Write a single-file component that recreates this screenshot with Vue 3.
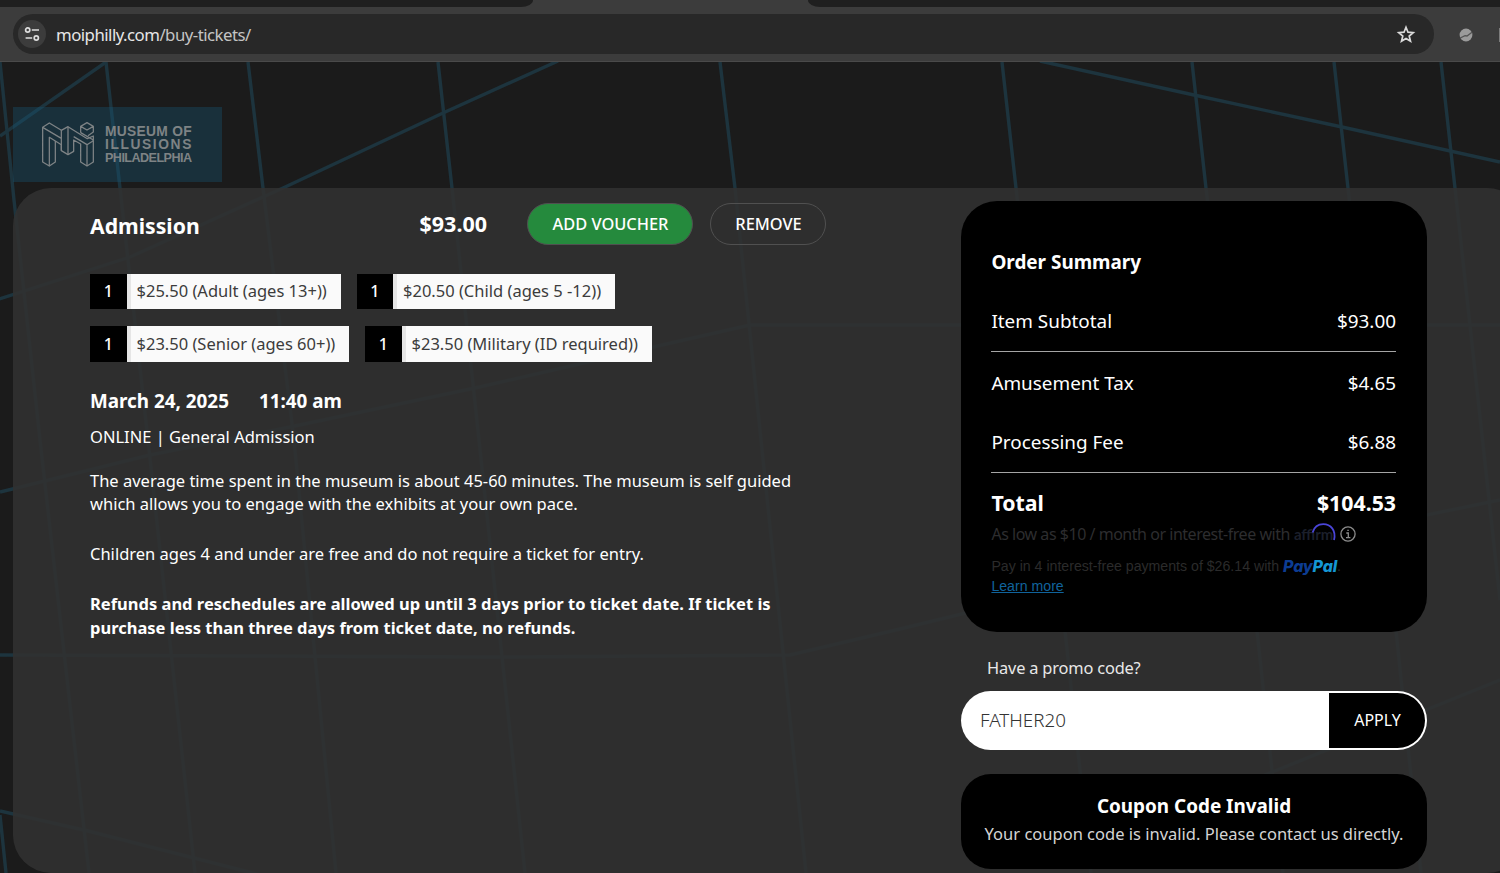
<template>
  <div class="window">
    <div class="tab-strip">
      <div class="tab-left"></div>
      <div class="tab-right"></div>
    </div>
    <div class="toolbar">
      <div class="omnibox">
        <span class="site-info">
          <svg width="16" height="16" viewBox="0 0 16 16" fill="none" stroke="#dedede" stroke-width="1.7">
            <circle cx="3.7" cy="4" r="2.1" />
            <path d="M7.8 4H15M1.6 12H8.2" />
            <circle cx="12.3" cy="12" r="2.1" />
          </svg>
        </span>
        <span class="url">moiphilly.com<span class="url-path">/buy-tickets/</span></span>
        <svg class="star" width="20" height="20" viewBox="0 0 20 20" fill="none" stroke="#dadada" stroke-width="1.7">
          <path d="M10 3.3L12 8.2L17.2 8.6L13.2 12L14.5 17.1L10 14.4L5.5 17.1L6.8 12L2.8 8.6L8 8.2Z" />
        </svg>
      </div>
      <svg class="extension" width="14" height="14" viewBox="0 0 14 14">
        <circle cx="7" cy="7" r="6.4" fill="#9b9b9b" />
        <path d="M1.2 10L6 7.6L8 8L13 4.2" fill="none" stroke="#555" stroke-width="1.3" />
      </svg>
      <span class="edge-dot"></span>
    </div>

    <div class="page">
      <svg class="backdrop" width="1500" height="811" viewBox="0 62 1500 811" fill="none">
        <path v-for="(d, index) in gridLines" :key="index" :d="d" />
      </svg>

      <div class="logo">
        <svg class="logo-mark" width="54" height="46" viewBox="9 9 162 138" fill="none">
          <path d="M14 28L34 15L70 37L90 26L148 62L166 54V132L147 144L128 132V78L107 66V100L90 110L70 98V80L34 58V144L14 132Z" />
          <path d="M14 28L70 61V98M70 37V61M90 26V110M34 144L52 132V69M107 56L147 80V144M147 80L166 68M128 44L166 66" />
          <path d="M128 44V25L147 14L166 25V42L150 53M128 25L147 36L166 25" />
        </svg>
        <div class="logo-text">
          <span class="logo-l1">MUSEUM OF</span>
          <span class="logo-l2">ILLUSIONS</span>
          <span class="logo-l3">PHILADELPHIA</span>
        </div>
      </div>

      <main class="cart">
        <section class="details">
          <div class="item-head">
            <h2 class="item-name">Admission</h2>
            <span class="item-price">$93.00</span>
            <button class="btn btn-voucher">ADD VOUCHER</button>
            <button class="btn btn-remove">REMOVE</button>
          </div>

          <div v-for="(row, index) in tickets" :key="index" class="ticket-row">
            <div v-for="ticket in row" :key="ticket.label" class="ticket">
              <span class="qty">{{ ticket.qty }}</span>
              <span class="ticket-label">{{ ticket.label }}</span>
            </div>
          </div>

          <div class="when">
            <span class="date">March 24, 2025</span>
            <span class="time">11:40 am</span>
          </div>
          <p class="type">ONLINE | General Admission</p>
          <p class="copy">The average time spent in the museum is about 45-60 minutes. The museum is self guided<br>which allows you to engage with the exhibits at your own pace.</p>
          <p class="copy copy-free">Children ages 4 and under are free and do not require a ticket for entry.</p>
          <p class="copy copy-bold">Refunds and reschedules are allowed up until 3 days prior to ticket date. If ticket is<br>purchase less than three days from ticket date, no refunds.</p>
        </section>

        <aside class="sidebar">
          <div class="summary">
            <h3 class="summary-title">Order Summary</h3>
            <div v-for="line in charges" :key="line.name" class="charge" :class="line.cls">
              <span>{{ line.name }}</span>
              <span>{{ line.amount }}</span>
            </div>
            <div class="total">
              <span>Total</span>
              <span>$104.53</span>
            </div>
            <div class="affirm">
              <span class="affirm-text">As low as $10 / month or interest-free with</span>
              <span class="affirm-logo">affirm
                <svg class="affirm-arc" width="26" height="20" viewBox="0 0 26 20" fill="none" stroke="#4a45d8" stroke-width="1.8">
                  <path d="M1.6 9.5C3.2 4 7.5 1.2 12.3 1.2C19.5 1.2 25.4 7 23 17" />
                </svg>
              </span>
              <svg class="info" width="16" height="16" viewBox="0 0 16 16" fill="none" stroke="#8c8c8c" stroke-width="1.3">
                <circle cx="8" cy="8" r="7.1" />
                <path d="M6.3 7H8.3V11.5M6 11.6H10.4M7.3 4.4H8.8" />
              </svg>
            </div>
            <div class="paypal">
              <span class="paypal-text">Pay in 4 interest-free payments of $26.14 with</span>
              <span class="paypal-logo"><span class="pay">Pay</span><span class="pal">Pal</span></span>
              <span class="paypal-dot">.</span>
            </div>
            <a class="learn">Learn more</a>
          </div>

          <label class="promo-label">Have a promo code?</label>
          <div class="promo">
            <span class="promo-value">{{ promoCode }}</span>
            <button class="apply">APPLY</button>
          </div>

          <div class="alert">
            <strong class="alert-title">Coupon Code Invalid</strong>
            <span class="alert-text">Your coupon code is invalid. Please contact us directly.</span>
          </div>
        </aside>
      </main>
    </div>
  </div>
</template>

<script setup>
import { ref } from 'vue'

const promoCode = ref('FATHER20')

const tickets = [
  [
    { qty: 1, label: '$25.50 (Adult (ages 13+))' },
    { qty: 1, label: '$20.50 (Child (ages 5 -12))' },
  ],
  [
    { qty: 1, label: '$23.50 (Senior (ages 60+))' },
    { qty: 1, label: '$23.50 (Military (ID required))' },
  ],
]

const charges = [
  { name: 'Item Subtotal', amount: '$93.00', cls: 'subtotal' },
  { name: 'Amusement Tax', amount: '$4.65', cls: 'tax' },
  { name: 'Processing Fee', amount: '$6.88', cls: 'fee' },
]

// perspective grid behind the cart
const gridLines = [
  'M0 62L14 200L40 440L89 873',
  'M106 62L120 188L148 440L195 873',
  'M248 62L263 188L294 440L336 873',
  'M438 62L452 188L479 440L525 873',
  'M720 62L735 188L761 440L806 873',
  'M1002 62L1016 188L1066 640L1091 873',
  'M1192 62L1206 188L1258 640L1283 873',
  'M1334 62L1348 188L1397 640L1421 873',
  'M1441 62L1455 188L1500 600',
  'M0 136L106 62',
  'M-4 300L130 257L283 188L443 113L558 61',
  'M1040 61L1194 95L1342 127L1500 162',
  'M0 492L150 455L290 427L475 388L640 350L750 325H1500',
  'M0 655L500 657L790 655L900 629L1060 590L1500 500',
  'M0 811L88 831L280 880M1180 812L1265 775L1500 680',
  'M0 815L6 873',
]
</script>

<style>
body {
  background: #1b1b1b;
}
</style>

<style scoped>
.window {
  width: 1500px;
  height: 873px;
  overflow: hidden;
  display: flex;
  flex-direction: column;
  font-family: "Noto Sans", sans-serif;
  color: #fff;
}

.tab-strip {
  height: 7px;
  display: flex;
  justify-content: space-between;
  background: #3c3c3c;
}

.tab-left {
  width: 533px;
  background: #1f1f1f;
  border-bottom-right-radius: 12px 7px;
}

.tab-right {
  width: 692px;
  background: #1f1f1f;
  border-bottom-left-radius: 12px 7px;
}

.toolbar {
  box-sizing: border-box;
  height: 55px;
  padding: 7px 0 0 13px;
  display: flex;
  background: #3c3c3c;
  border-bottom: 1px solid #4a4a4a;
}

.omnibox {
  box-sizing: border-box;
  width: 1421px;
  height: 40px;
  padding: 0 18px 0 5px;
  display: flex;
  align-items: center;
  border-radius: 20px;
  background: #282828;
}

.site-info {
  width: 28px;
  height: 28px;
  display: flex;
  align-items: center;
  justify-content: center;
  border-radius: 50%;
  background: #3c3c3c;
}

.url {
  margin-left: 10px;
  font-size: 16.8px;
  letter-spacing: -0.52px;
  color: #e6e6e6;
}

.url-path {
  color: #c4c4c4;
}

.star {
  margin-left: auto;
}

.extension {
  margin: 13.5px 0 0 25px;
}

.edge-dot {
  width: 1px;
  height: 14px;
  margin: 14px 0 0 auto;
  background: #7c7c7c;
}

.page {
  position: relative;
  flex: 1;
  box-sizing: border-box;
  padding-top: 45px;
  background: #1b1b1b;
}

.backdrop {
  position: absolute;
  top: 0;
  left: 0;
  stroke: #1d343e;
  stroke-width: 3.4;
}

.logo {
  position: relative;
  box-sizing: border-box;
  width: 209px;
  height: 75px;
  margin: 0 0 6px 13px;
  padding: 14px 0 0 28px;
  display: flex;
  background: rgba(24, 90, 120, 0.35);
}

.logo-mark {
  stroke: #7e8385;
  stroke-width: 3.8;
  stroke-linejoin: round;
}

.logo-text {
  margin: 4px 0 0 10px;
  display: flex;
  flex-direction: column;
  font: bold 13.8px/13.4px "Liberation Sans", Arial, sans-serif;
  color: #7e8385;
  white-space: pre;
}

.logo-l1 {
  letter-spacing: 0.3px;
}

.logo-l2 {
  letter-spacing: 1.6px;
}

.logo-l3 {
  font-size: 12.6px;
  letter-spacing: -0.55px;
}

.cart {
  position: relative;
  box-sizing: border-box;
  width: 1512px;
  height: 685px;
  margin-left: 13px;
  padding-left: 77px;
  display: flex;
  border-radius: 38px;
  background: rgba(49, 49, 49, 0.9);
}

.details {
  width: 871px;
  padding-top: 15px;
}

.item-head {
  height: 42px;
  display: flex;
  align-items: center;
}

.item-name {
  width: 329.5px;
  margin: 4px 0 0;
  font-size: 21.2px;
  line-height: 30px;
}

.item-price {
  width: 107.5px;
  padding-bottom: 2px;
  font-size: 21.5px;
  font-weight: bold;
}

.btn {
  box-sizing: border-box;
  height: 42px;
  padding: 0 0 2px 1px;
  border: 1px solid #505050;
  border-radius: 21px;
  font-family: inherit;
  font-size: 16.4px;
  font-weight: 500;
  color: #fff;
  background: none;
}

.btn-voucher {
  width: 166px;
  margin-right: 17px;
  background: #258a3d;
}

.btn-remove {
  width: 116px;
}

.ticket-row {
  height: 35px;
  margin-top: 28.5px;
  display: flex;
  gap: 16px;
}

.ticket-row + .ticket-row {
  height: 36px;
  margin-top: 17.5px;
}

.ticket {
  display: flex;
  align-items: center;
  background: #fafafa;
}

.qty {
  width: 36.5px;
  align-self: stretch;
  display: flex;
  align-items: center;
  justify-content: center;
  background: #000;
  font-size: 16px;
  font-weight: 500;
}

.ticket-label {
  padding: 0 13.7px 2px 6px;
  border-left: 4px solid #e6e6e6;
  align-self: stretch;
  display: flex;
  align-items: center;
  font-size: 16.5px;
  color: #3c3c3c;
  white-space: nowrap;
}

.when {
  margin-top: 25px;
  font-size: 18.85px;
  font-weight: bold;
  line-height: 28px;
}

.time {
  margin-left: 30px;
}

.type {
  margin: 9.5px 0 0;
  font-size: 16.5px;
  line-height: 24px;
}

.copy {
  margin: 20.2px 0 0;
  font-size: 16.5px;
  line-height: 23.6px;
  white-space: nowrap;
}

.copy-free,
.copy-bold {
  margin-top: 26.3px;
}

.copy-bold {
  font-weight: bold;
}

.sidebar {
  width: 466px;
  padding-top: 13px;
  display: flex;
  flex-direction: column;
}

.summary {
  box-sizing: border-box;
  height: 431px;
  padding: 46px 31px 0 30.4px;
  border-radius: 36px;
  background: #000;
}

.summary-title {
  margin: 0;
  font-size: 18.9px;
  line-height: 30px;
}

.charge {
  box-sizing: border-box;
  display: flex;
  justify-content: space-between;
  font-size: 18.9px;
  line-height: 30px;
}

.subtotal {
  height: 46px;
  margin-top: 29px;
  border-bottom: 1px solid #a5a5a5;
}

.tax {
  margin-top: 16px;
}

.fee {
  height: 46px;
  margin-top: 29px;
  border-bottom: 1px solid #a5a5a5;
}

.total {
  margin-top: 15px;
  display: flex;
  justify-content: space-between;
  font-size: 21.3px;
  font-weight: bold;
  line-height: 30px;
}

.affirm {
  height: 24px;
  margin-top: 4px;
  display: flex;
  align-items: center;
  color: #2d2d2f;
}

.affirm-text {
  font-size: 16px;
  letter-spacing: -0.47px;
  white-space: nowrap;
}

.affirm-logo {
  position: relative;
  width: 42px;
  margin-left: 4px;
  font: bold 15px/20px Lato, sans-serif;
  color: #1b1f2b;
}

.affirm-arc {
  position: absolute;
  left: 17px;
  top: -1px;
}

.info {
  margin-left: 4px;
}

.paypal {
  height: 20px;
  margin-top: 10px;
  display: flex;
  align-items: center;
  font-family: "Liberation Sans", Arial, sans-serif;
  font-size: 14.15px;
  color: #2b2b2b;
  white-space: nowrap;
}

.paypal-logo {
  margin-left: 4px;
  font: italic 800 16px/20px Inter, sans-serif;
  letter-spacing: -0.2px;
}

.pay {
  color: #0c3c92;
}

.pal {
  color: #1496d4;
}

.learn {
  display: block;
  font: 14.15px/20px "Liberation Sans", Arial, sans-serif;
  color: #10639c;
  text-decoration: underline;
}

.promo-label {
  margin: 24px 0 0 26px;
  font-size: 16.4px;
  letter-spacing: -0.18px;
  line-height: 24px;
  color: #e8e8e8;
}

.promo {
  box-sizing: border-box;
  height: 59px;
  margin-top: 11px;
  padding: 2px;
  display: flex;
  justify-content: space-between;
  align-items: center;
  border-radius: 30px;
  background: #fff;
}

.promo-value {
  margin-left: 17px;
  padding-bottom: 1px;
  font-size: 18.8px;
  font-weight: 300;
  color: #333;
}

.apply {
  width: 96px;
  height: 55px;
  padding: 0 0 1px 1px;
  border: 0;
  border-radius: 0 28px 28px 0;
  font: 16px "Noto Sans", sans-serif;
  color: #fff;
  background: #000;
}

.alert {
  box-sizing: border-box;
  height: 95px;
  margin-top: 24px;
  padding-top: 19px;
  display: flex;
  flex-direction: column;
  align-items: center;
  border-radius: 30px;
  background: #000;
}

.alert-title {
  font-size: 18.9px;
  line-height: 27px;
}

.alert-text {
  font-size: 16.5px;
  line-height: 28px;
  color: #d4d4d4;
  white-space: nowrap;
}
</style>
